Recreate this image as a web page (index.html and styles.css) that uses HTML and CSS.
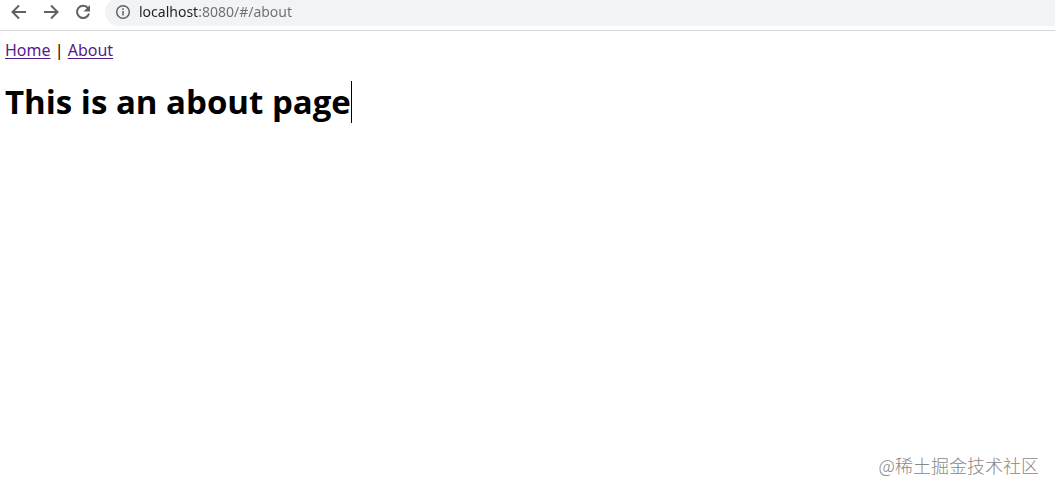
FILE: index.html
```html
<!DOCTYPE html>
<html lang="en">
<head>
<meta charset="utf-8">
<title>About</title>
<link rel="stylesheet" href="styles.css">
</head>
<body>
<header class="toolbar">
  <button class="tool" type="button" aria-label="Back">
    <svg viewBox="0 0 16 16"><path d="M15 8H2M8 1.5L1.5 8 8 14.5"/></svg>
  </button>
  <button class="tool" type="button" aria-label="Forward">
    <svg viewBox="0 0 16 16"><path d="M1 8h13M8 1.5L14.500 8 8 14.500"/></svg>
  </button>
  <button class="tool" type="button" aria-label="Reload">
    <svg viewBox="0 0 16 16"><path d="M13 4.200A6.100 6.100 0 1 0 14 9.500"/><path class="solid" d="M15 1v6.500H8.500z"/></svg>
  </button>
  <div class="omnibox">
    <button class="info" type="button" aria-label="View site information">
      <svg viewBox="0 0 16 16"><circle cx="8" cy="8" r="6.300"/><path d="M8 7v4.500M8 4.300v1.600"/></svg>
    </button>
    <input class="address" type="text" aria-label="Address" value="localhost:8080/#/about" spellcheck="false">
  </div>
</header>
<main class="page">
  <nav class="nav"><a href="#/">Home</a> | <a href="#/about">About</a></nav>
  <h1 class="title">This is an about page<span class="caret"></span></h1>
</main>
<footer class="watermark">@稀土掘金技术社区</footer>
</body>
</html>
```
FILE: styles.css
```css
* {
  box-sizing: border-box;
}

body {
  display: flex;
  flex-direction: column;
  min-height: 100vh;
  margin: 0;
  background: #fff;
  color: #000;
  font-family: "Noto Sans", "Open Sans", "Noto Sans CJK SC", sans-serif;
}

.toolbar {
  display: flex;
  align-items: flex-start;
  height: 31px;
  padding-left: 3px;
  border-bottom: 1px solid #d5d8dc;
  overflow: hidden;
}

.tool,
.info {
  display: grid;
  place-items: center;
  flex: none;
  padding: 0;
  border: 0;
  background: none;
}

.tool {
  width: 32px;
  height: 24px;
}

.tool svg,
.info svg {
  width: 16px;
  height: 16px;
  fill: none;
  stroke: #5f6368;
  stroke-width: 2;
}

.tool .solid {
  fill: #5f6368;
  stroke: none;
}

.omnibox {
  display: flex;
  align-items: center;
  flex: 1;
  height: 28px;
  margin: -2px 0 0 6px;
  padding-left: 10px;
  border-radius: 14px 0 0 14px;
  background: #f1f3f4;
}

.info svg {
  stroke-width: 1.5;
}

.address {
  flex: 1;
  min-width: 0;
  margin-left: 8px;
  padding: 0;
  border: 0;
  outline: 0;
  background: linear-gradient(90deg, #202124 60px, #6b6f73 60px) text;
  color: transparent;
  font: 14px/20px "Noto Sans", "Open Sans", sans-serif;
}

.page {
  flex: 1;
  padding: 8px 5px;
}

.nav {
  font-size: 16px;
  line-height: 22px;
}

.nav a {
  color: #551a8b;
  text-underline-offset: 2px;
}

.title {
  display: flex;
  align-items: center;
  margin: 20px 0;
  font-family: "Open Sans", "Noto Sans", sans-serif;
  font-size: 33px;
  font-weight: 700;
  line-height: 42px;
}

.caret {
  width: 1px;
  height: 42px;
  background: #000;
}

.watermark {
  padding: 0 16px 15px;
  color: #888;
  font: 300 18px/26px "Noto Sans CJK SC", sans-serif;
  text-align: right;
}
```
